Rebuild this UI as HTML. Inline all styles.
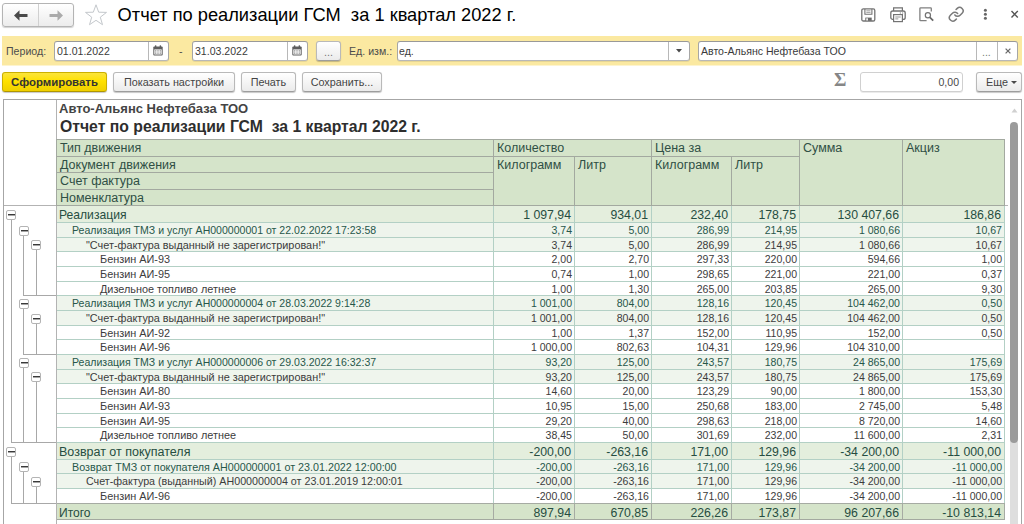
<!DOCTYPE html>
<html><head><meta charset="utf-8"><title>Отчет по реализации ГСМ</title>
<style>
html,body{margin:0;padding:0}
body{width:1024px;height:524px;overflow:hidden;background:#fff;position:relative;font-family:"Liberation Sans",sans-serif;color:#333;font-size:11px}
div,span,i{box-sizing:border-box}
.a{position:absolute}
/* top nav */
.nav{position:absolute;left:2px;top:3px;width:72px;height:24px;border:1px solid #b4b4b4;border-radius:3px;background:linear-gradient(#fff,#ececec);box-shadow:0 1px 1px rgba(0,0,0,.18)}
.nav .d{position:absolute;left:35px;top:0;width:1px;height:22px;background:#d0d0d0}
.title{position:absolute;left:117.6px;top:4px;font-size:18.25px;line-height:22px;color:#000;white-space:pre}
/* yellow bar */
.ybar{position:absolute;left:2px;top:36px;width:1020px;height:29px;border-bottom:1px solid #fdf4cf;box-sizing:content-box;background:#fbe9a1}
.lbl{position:absolute;font-size:10.6px;color:#4c4c4c;line-height:14px;white-space:pre}
.inp{position:absolute;height:20px;background:#fff;border:1px solid #a6a6a6;border-top-color:#999;border-bottom-color:#b8b8b8;border-radius:3px;font-size:10.55px;line-height:19px;color:#3a3a3a;white-space:pre;box-shadow:0 1px 0 rgba(0,0,0,.08)}
.inp .t{position:absolute;left:2px;top:0}
.inp .sep{position:absolute;top:0;width:1px;height:18px;background:#b8b8b8}
.btn{position:absolute;height:20px;border:1px solid #b9b9b9;border-bottom-color:#9d9d9d;border-radius:3px;background:linear-gradient(#ffffff,#ebebeb);box-shadow:0 1px 1px rgba(0,0,0,.22);font-size:10.8px;line-height:18px;text-align:center;color:#444;white-space:pre}
.btn.y{background:linear-gradient(#fbe43c,#ffe100 45%,#f0d000);border-color:#cbb000;border-bottom-color:#b09600;color:#333;font-weight:bold;font-size:11.4px}
/* sheet */
.frame{position:absolute;left:3px;top:99px;width:1019px;height:430px;border:1px solid #a6a6a6;border-right-color:#a6a6a6;background:#fff}
.vsep{position:absolute;left:56px;top:100px;width:1px;height:425px;background:#b3b3b3}
.hsep{position:absolute;left:4px;top:205px;width:52px;height:1px;background:#b3b3b3}
.org{position:absolute;left:59px;top:101px;font-size:13px;font-weight:bold;line-height:16px;color:#444;white-space:pre}
.rt{position:absolute;left:60px;top:117px;font-size:15.75px;font-weight:bold;line-height:19px;color:#2e2e2e;white-space:pre}
.hd{position:absolute;background:#d5e4ca;border:1px solid #a3a9a0;font-size:12.5px;line-height:17px;color:#2f4f45;white-space:pre;padding:0 0 0 3px}
.r{position:absolute;left:0;width:1024px}
.r .n{position:absolute;top:0;white-space:pre}
.r .v{position:absolute;top:0;text-align:right;padding-right:2px;white-space:pre}
.l0 .n,.l0 .v,.l4 .n,.l4 .v{top:1px}
.l0 .v,.l4 .v{padding-right:3px}
.r::before{content:"";box-sizing:border-box;position:absolute;left:57px;top:0;height:100%;background-color:#fff;border-bottom:1px solid #b3d0c5;background-size:1px 100%;background-repeat:no-repeat}
.r::before{width:948px;background-image:linear-gradient(#b3d0c5,#b3d0c5),linear-gradient(#b3d0c5,#b3d0c5),linear-gradient(#b3d0c5,#b3d0c5),linear-gradient(#b3d0c5,#b3d0c5),linear-gradient(#b3d0c5,#b3d0c5),linear-gradient(#b3d0c5,#b3d0c5),linear-gradient(#b3d0c5,#b3d0c5);background-position:436px 0,517px 0,594px 0,674px 0,742px 0,845px 0,947px 0}
.l4::before{background-image:linear-gradient(#a6aba3,#a6aba3),linear-gradient(#a6aba3,#a6aba3),linear-gradient(#a6aba3,#a6aba3),linear-gradient(#a6aba3,#a6aba3),linear-gradient(#a6aba3,#a6aba3),linear-gradient(#a6aba3,#a6aba3),linear-gradient(#a6aba3,#a6aba3);border-top:1px solid #a6aba3;top:-1px;height:calc(100% + 1px)}
.l1,.l2,.l3{font-size:10.55px;line-height:14px;color:#3c3c3c}
.l0{font-size:12.3px;line-height:17px;color:#2f3d33}
.l4{font-size:12.3px;line-height:17px;color:#2f3d33}
.l0::before{background-color:#e4eedd}
.l1::before{background-color:#eef4ec}
.l2::before{background-color:#eff5ed}
.l4::before{background-color:#d5e4ca;border-bottom-color:#a3a9a0}
.l1 .n,.l1 .v{color:#27574a}
.l0 .n,.l0 .v,.l4 .n,.l4 .v{color:#264d41}
/* tree */
.bx{position:absolute;width:10px;height:10px;border:1px solid #b4b4b4;border-radius:2px;background:#fff}
.bx i{position:absolute;left:0.5px;top:3px;width:7px;height:2px;background:linear-gradient(#3a3a3a 50%,#a5a5a5 50%)}
.tl{position:absolute;background:#a8a8a8}
/* scrollbar */
.thumb{position:absolute;left:1010px;top:122px;width:8px;height:321px;border-radius:4px;background:#9b9b9b}
</style></head>
<body>
<!-- nav buttons -->
<div class="nav"><div class="d"></div>
<svg class="a" style="left:11px;top:6px" width="14" height="11" viewBox="0 0 14 10" preserveAspectRatio="none"><path d="M0 5 L5.5 0.3 V3.6 H13.5 V6.4 H5.5 V9.7 Z" fill="#4a4a4a"/></svg>
<svg class="a" style="left:46px;top:6px" width="14" height="11" viewBox="0 0 14 10" preserveAspectRatio="none"><path d="M14 5 L8.5 0.3 V3.6 H0.5 V6.4 H8.5 V9.7 Z" fill="#ababab"/></svg>
</div>
<svg class="a" style="left:84px;top:3px" width="24" height="23" viewBox="0 0 24 23"><path d="M12 1.8 L14.7 9.2 L22.5 9.4 L16.3 14.2 L18.5 21.7 L12 17.3 L5.5 21.7 L7.7 14.2 L1.5 9.4 L9.3 9.2 Z" fill="#fff" stroke="#c4c8cc" stroke-width="1"/></svg>
<div class="title">Отчет по реализации ГСМ  за 1 квартал 2022 г.</div>

<!-- right icons -->
<svg class="a" style="left:860px;top:7px" width="17" height="16" viewBox="0 0 17 16"><rect x="1.8" y="1.8" width="13" height="12.2" rx="1.6" fill="none" stroke="#737373" stroke-width="1.3"/><path d="M4.9 2 V7.2 H11.9 V2" fill="none" stroke="#737373" stroke-width="1.1"/><path d="M6.3 3.8 H10.5 M6.3 5.4 H10.5" stroke="#8a8a8a" stroke-width="0.8"/><rect x="5.3" y="10.6" width="6.4" height="3.2" fill="#6a6a6a"/><rect x="6.2" y="11.3" width="1.8" height="2.2" fill="#f0f0f0"/></svg>
<svg class="a" style="left:889px;top:6px" width="18" height="17" viewBox="0 0 18 17"><path d="M4.6 5 V1.8 H13.4 V5" fill="none" stroke="#737373" stroke-width="1.2"/><rect x="1.8" y="5" width="14.4" height="8.4" rx="2" fill="#fff" stroke="#737373" stroke-width="1.3"/><rect x="4.6" y="8.6" width="8.8" height="7" fill="#fff" stroke="#737373" stroke-width="1.2"/><path d="M6.3 11 H11.7 M6.3 12.9 H9.3" stroke="#8a8a8a" stroke-width="0.9"/><path d="M10.8 7 H12 M13 7 H14.2" stroke="#777" stroke-width="0.9"/></svg>
<svg class="a" style="left:918px;top:6px" width="18" height="17" viewBox="0 0 18 17"><path d="M13.3 5.5 V2.6 Q13.3 1.9 12.6 1.9 H2.6 Q1.9 1.9 1.9 2.6 V14 Q1.9 14.7 2.6 14.7 H8.6" fill="none" stroke="#808080" stroke-width="1.3"/><circle cx="9.9" cy="9.3" r="2.6" fill="#fff" stroke="#737373" stroke-width="1.2"/><path d="M11.9 11.4 L15.2 14.6" stroke="#666" stroke-width="1.7"/></svg>
<svg class="a" style="left:948px;top:6px" width="16.5" height="16.5" viewBox="0 0 24 24" fill="none" stroke="#7a7a7a" stroke-width="2.2" stroke-linecap="round"><path d="M10 13a5 5 0 0 0 7.54.54l3-3a5 5 0 0 0-7.07-7.07l-1.72 1.71"/><path d="M14 11a5 5 0 0 0-7.54-.54l-3 3a5 5 0 0 0 7.07 7.07l1.71-1.71"/></svg>
<svg class="a" style="left:983px;top:8px" width="5" height="13" viewBox="0 0 5 13"><circle cx="2.4" cy="2.3" r="1.5" fill="#666"/><circle cx="2.4" cy="6.3" r="1.5" fill="#666"/><circle cx="2.4" cy="10.3" r="1.5" fill="#666"/></svg>
<svg class="a" style="left:1010px;top:10px" width="9" height="9" viewBox="0 0 9 9"><path d="M1.5 1 L7.8 7.5 M7.8 1 L1.5 7.5" stroke="#555" stroke-width="1.4"/></svg>

<!-- yellow bar -->
<div class="ybar"></div>
<div class="lbl" style="left:6px;top:44px">Период:</div>
<div class="inp" style="left:54px;top:41px;width:115px"><span class="t">01.01.2022</span><div class="sep" style="left:93px"></div><svg class="a" style="left:98px;top:3px" width="10" height="10.5" viewBox="0 0 10 10.5"><rect x="0.3" y="1.5" width="9.4" height="9" rx="1" fill="#5e5e5e"/><rect x="1.9" y="0.2" width="1.5" height="2" rx="0.6" fill="#5e5e5e"/><rect x="6.6" y="0.2" width="1.5" height="2" rx="0.6" fill="#5e5e5e"/><rect x="1.3" y="4.4" width="7.4" height="5.1" fill="#fff"/><g fill="#8a8a8a"><rect x="2" y="5.3" width="1.4" height="1.2"/><rect x="4.3" y="5.3" width="1.4" height="1.2"/><rect x="6.6" y="5.3" width="1.4" height="1.2"/><rect x="2" y="7.5" width="1.4" height="1.2"/><rect x="4.3" y="7.5" width="1.4" height="1.2"/><rect x="6.6" y="7.5" width="1.4" height="1.2"/></g></svg></div>
<div class="lbl" style="left:179px;top:44px">-</div>
<div class="inp" style="left:192px;top:41px;width:116px"><span class="t">31.03.2022</span><div class="sep" style="left:94px"></div><svg class="a" style="left:99px;top:3px" width="10" height="10.5" viewBox="0 0 10 10.5"><rect x="0.3" y="1.5" width="9.4" height="9" rx="1" fill="#5e5e5e"/><rect x="1.9" y="0.2" width="1.5" height="2" rx="0.6" fill="#5e5e5e"/><rect x="6.6" y="0.2" width="1.5" height="2" rx="0.6" fill="#5e5e5e"/><rect x="1.3" y="4.4" width="7.4" height="5.1" fill="#fff"/><g fill="#8a8a8a"><rect x="2" y="5.3" width="1.4" height="1.2"/><rect x="4.3" y="5.3" width="1.4" height="1.2"/><rect x="6.6" y="5.3" width="1.4" height="1.2"/><rect x="2" y="7.5" width="1.4" height="1.2"/><rect x="4.3" y="7.5" width="1.4" height="1.2"/><rect x="6.6" y="7.5" width="1.4" height="1.2"/></g></svg></div>
<div class="btn" style="left:316px;top:41px;width:25px;height:20px;line-height:20px;color:#777">...</div>
<div class="lbl" style="left:349px;top:44px">Ед. изм.:</div>
<div class="inp" style="left:397px;top:41px;width:293px"><span class="t" style="left:1px">ед.</span><div class="sep" style="left:270px"></div><svg class="a" style="left:277.5px;top:7px" width="6" height="3.6" viewBox="0 0 7 4"><path d="M0 0 H7 L3.5 4 Z" fill="#4a4a4a"/></svg></div>
<div class="inp" style="left:698px;top:41px;width:320px"><span class="t">Авто-Альянс Нефтебаза ТОО</span><div class="sep" style="left:277px"></div><div class="sep" style="left:298px"></div><span class="a" style="left:283px;top:1px;color:#777">...</span><svg class="a" style="left:305.5px;top:6px" width="6" height="6" viewBox="0 0 7 7"><path d="M0.7 0.7 L6.3 6.3 M6.3 0.7 L0.7 6.3" stroke="#6a6a6a" stroke-width="1.5"/></svg></div>

<!-- command bar -->
<div class="btn y" style="left:2px;top:72px;width:105px">Сформировать</div>
<div class="btn" style="left:113px;top:72px;width:122px">Показать настройки</div>
<div class="btn" style="left:241px;top:72px;width:55px">Печать</div>
<div class="btn" style="left:302px;top:72px;width:80px">Сохранить...</div>
<div class="a" style="left:834px;top:69px;font-family:'Liberation Serif',serif;font-size:19px;line-height:22px;color:#868686;font-weight:bold">Σ</div>
<div class="inp" style="left:860px;top:72px;width:103px;height:20px;border-color:#d0d0d0;text-align:right"><span class="a" style="right:3px;top:0px;color:#4a4a4a">0,00</span></div>
<div class="btn" style="left:976px;top:72px;width:46px;text-align:left;padding-left:9px">Еще<svg class="a" style="left:34px;top:8px" width="6" height="3" viewBox="0 0 6 3"><path d="M0 0 H6 L3 3 Z" fill="#4a4a4a"/></svg></div>

<!-- sheet -->
<div class="frame"></div>
<div class="vsep"></div>
<div class="hsep"></div>
<div class="org">Авто-Альянс Нефтебаза ТОО</div>
<div class="rt">Отчет по реализации ГСМ  за 1 квартал 2022 г.</div>


<div class="hd" style="left:56px;top:139px;width:438px;height:18px">Тип движения</div>
<div class="hd" style="left:56px;top:156px;width:438px;height:17px">Документ движения</div>
<div class="hd" style="left:56px;top:172px;width:438px;height:18px">Счет фактура</div>
<div class="hd" style="left:56px;top:189px;width:438px;height:17px">Номенклатура</div>
<div class="hd" style="left:493px;top:139px;width:159px;height:18px">Количество</div>
<div class="hd" style="left:493px;top:156px;width:82px;height:50px">Килограмм</div>
<div class="hd" style="left:574px;top:156px;width:78px;height:50px">Литр</div>
<div class="hd" style="left:651px;top:139px;width:149px;height:18px">Цена за</div>
<div class="hd" style="left:651px;top:156px;width:81px;height:50px">Килограмм</div>
<div class="hd" style="left:731px;top:156px;width:69px;height:50px">Литр</div>
<div class="hd" style="left:799px;top:139px;width:104px;height:67px">Сумма</div>
<div class="hd" style="left:902px;top:139px;width:103px;height:67px">Акциз</div>
<div class="r l0" style="top:206px;height:17px">
<span class="n" style="left:59px;font-size:12.13px">Реализация</span>
<span class="v" style="left:494px;width:80px">1 097,94</span>
<span class="v" style="left:575px;width:76px">934,01</span>
<span class="v" style="left:652px;width:79px">232,40</span>
<span class="v" style="left:732px;width:67px">178,75</span>
<span class="v" style="left:800px;width:102px">130 407,66</span>
<span class="v" style="left:903px;width:101px">186,86</span>
</div>
<div class="r l1" style="top:223px;height:15px">
<span class="n" style="left:72px;font-size:10.55px">Реализация ТМЗ и услуг АН000000001 от 22.02.2022 17:23:58</span>
<span class="v" style="left:494px;width:80px">3,74</span>
<span class="v" style="left:575px;width:76px">5,00</span>
<span class="v" style="left:652px;width:79px">286,99</span>
<span class="v" style="left:732px;width:67px">214,95</span>
<span class="v" style="left:800px;width:102px">1 080,66</span>
<span class="v" style="left:903px;width:101px">10,67</span>
</div>
<div class="r l2" style="top:238px;height:14px">
<span class="n" style="left:86px;font-size:10.86px">&quot;Счет-фактура выданный не зарегистрирован!&quot;</span>
<span class="v" style="left:494px;width:80px">3,74</span>
<span class="v" style="left:575px;width:76px">5,00</span>
<span class="v" style="left:652px;width:79px">286,99</span>
<span class="v" style="left:732px;width:67px">214,95</span>
<span class="v" style="left:800px;width:102px">1 080,66</span>
<span class="v" style="left:903px;width:101px">10,67</span>
</div>
<div class="r l3" style="top:252px;height:15px">
<span class="n" style="left:100px;font-size:10.86px">Бензин АИ-93</span>
<span class="v" style="left:494px;width:80px">2,00</span>
<span class="v" style="left:575px;width:76px">2,70</span>
<span class="v" style="left:652px;width:79px">297,33</span>
<span class="v" style="left:732px;width:67px">220,00</span>
<span class="v" style="left:800px;width:102px">594,66</span>
<span class="v" style="left:903px;width:101px">1,00</span>
</div>
<div class="r l3" style="top:267px;height:15px">
<span class="n" style="left:100px;font-size:10.86px">Бензин АИ-95</span>
<span class="v" style="left:494px;width:80px">0,74</span>
<span class="v" style="left:575px;width:76px">1,00</span>
<span class="v" style="left:652px;width:79px">298,65</span>
<span class="v" style="left:732px;width:67px">221,00</span>
<span class="v" style="left:800px;width:102px">221,00</span>
<span class="v" style="left:903px;width:101px">0,37</span>
</div>
<div class="r l3" style="top:282px;height:14px">
<span class="n" style="left:100px;font-size:10.86px">Дизельное топливо летнее</span>
<span class="v" style="left:494px;width:80px">1,00</span>
<span class="v" style="left:575px;width:76px">1,30</span>
<span class="v" style="left:652px;width:79px">265,00</span>
<span class="v" style="left:732px;width:67px">203,85</span>
<span class="v" style="left:800px;width:102px">265,00</span>
<span class="v" style="left:903px;width:101px">9,30</span>
</div>
<div class="r l1" style="top:296px;height:15px">
<span class="n" style="left:72px;font-size:10.55px">Реализация ТМЗ и услуг АН000000004 от 28.03.2022 9:14:28</span>
<span class="v" style="left:494px;width:80px">1 001,00</span>
<span class="v" style="left:575px;width:76px">804,00</span>
<span class="v" style="left:652px;width:79px">128,16</span>
<span class="v" style="left:732px;width:67px">120,45</span>
<span class="v" style="left:800px;width:102px">104 462,00</span>
<span class="v" style="left:903px;width:101px">0,50</span>
</div>
<div class="r l2" style="top:311px;height:15px">
<span class="n" style="left:86px;font-size:10.86px">&quot;Счет-фактура выданный не зарегистрирован!&quot;</span>
<span class="v" style="left:494px;width:80px">1 001,00</span>
<span class="v" style="left:575px;width:76px">804,00</span>
<span class="v" style="left:652px;width:79px">128,16</span>
<span class="v" style="left:732px;width:67px">120,45</span>
<span class="v" style="left:800px;width:102px">104 462,00</span>
<span class="v" style="left:903px;width:101px">0,50</span>
</div>
<div class="r l3" style="top:326px;height:14px">
<span class="n" style="left:100px;font-size:10.86px">Бензин АИ-92</span>
<span class="v" style="left:494px;width:80px">1,00</span>
<span class="v" style="left:575px;width:76px">1,37</span>
<span class="v" style="left:652px;width:79px">152,00</span>
<span class="v" style="left:732px;width:67px">110,95</span>
<span class="v" style="left:800px;width:102px">152,00</span>
<span class="v" style="left:903px;width:101px">0,50</span>
</div>
<div class="r l3" style="top:340px;height:15px">
<span class="n" style="left:100px;font-size:10.86px">Бензин АИ-96</span>
<span class="v" style="left:494px;width:80px">1 000,00</span>
<span class="v" style="left:575px;width:76px">802,63</span>
<span class="v" style="left:652px;width:79px">104,31</span>
<span class="v" style="left:732px;width:67px">129,96</span>
<span class="v" style="left:800px;width:102px">104 310,00</span>
<span class="v" style="left:903px;width:101px"></span>
</div>
<div class="r l1" style="top:355px;height:15px">
<span class="n" style="left:72px;font-size:10.55px">Реализация ТМЗ и услуг АН000000006 от 29.03.2022 16:32:37</span>
<span class="v" style="left:494px;width:80px">93,20</span>
<span class="v" style="left:575px;width:76px">125,00</span>
<span class="v" style="left:652px;width:79px">243,57</span>
<span class="v" style="left:732px;width:67px">180,75</span>
<span class="v" style="left:800px;width:102px">24 865,00</span>
<span class="v" style="left:903px;width:101px">175,69</span>
</div>
<div class="r l2" style="top:370px;height:14px">
<span class="n" style="left:86px;font-size:10.86px">&quot;Счет-фактура выданный не зарегистрирован!&quot;</span>
<span class="v" style="left:494px;width:80px">93,20</span>
<span class="v" style="left:575px;width:76px">125,00</span>
<span class="v" style="left:652px;width:79px">243,57</span>
<span class="v" style="left:732px;width:67px">180,75</span>
<span class="v" style="left:800px;width:102px">24 865,00</span>
<span class="v" style="left:903px;width:101px">175,69</span>
</div>
<div class="r l3" style="top:384px;height:15px">
<span class="n" style="left:100px;font-size:10.86px">Бензин АИ-80</span>
<span class="v" style="left:494px;width:80px">14,60</span>
<span class="v" style="left:575px;width:76px">20,00</span>
<span class="v" style="left:652px;width:79px">123,29</span>
<span class="v" style="left:732px;width:67px">90,00</span>
<span class="v" style="left:800px;width:102px">1 800,00</span>
<span class="v" style="left:903px;width:101px">153,30</span>
</div>
<div class="r l3" style="top:399px;height:15px">
<span class="n" style="left:100px;font-size:10.86px">Бензин АИ-93</span>
<span class="v" style="left:494px;width:80px">10,95</span>
<span class="v" style="left:575px;width:76px">15,00</span>
<span class="v" style="left:652px;width:79px">250,68</span>
<span class="v" style="left:732px;width:67px">183,00</span>
<span class="v" style="left:800px;width:102px">2 745,00</span>
<span class="v" style="left:903px;width:101px">5,48</span>
</div>
<div class="r l3" style="top:414px;height:14px">
<span class="n" style="left:100px;font-size:10.86px">Бензин АИ-95</span>
<span class="v" style="left:494px;width:80px">29,20</span>
<span class="v" style="left:575px;width:76px">40,00</span>
<span class="v" style="left:652px;width:79px">298,63</span>
<span class="v" style="left:732px;width:67px">218,00</span>
<span class="v" style="left:800px;width:102px">8 720,00</span>
<span class="v" style="left:903px;width:101px">14,60</span>
</div>
<div class="r l3" style="top:428px;height:15px">
<span class="n" style="left:100px;font-size:10.86px">Дизельное топливо летнее</span>
<span class="v" style="left:494px;width:80px">38,45</span>
<span class="v" style="left:575px;width:76px">50,00</span>
<span class="v" style="left:652px;width:79px">301,69</span>
<span class="v" style="left:732px;width:67px">232,00</span>
<span class="v" style="left:800px;width:102px">11 600,00</span>
<span class="v" style="left:903px;width:101px">2,31</span>
</div>
<div class="r l0" style="top:443px;height:17px">
<span class="n" style="left:59px;font-size:12.5px">Возврат от покупателя</span>
<span class="v" style="left:494px;width:80px">-200,00</span>
<span class="v" style="left:575px;width:76px">-263,16</span>
<span class="v" style="left:652px;width:79px">171,00</span>
<span class="v" style="left:732px;width:67px">129,96</span>
<span class="v" style="left:800px;width:102px">-34 200,00</span>
<span class="v" style="left:903px;width:101px">-11 000,00</span>
</div>
<div class="r l1" style="top:460px;height:14px">
<span class="n" style="left:72px;font-size:10.74px">Возврат ТМЗ от покупателя АН000000001 от 23.01.2022 12:00:00</span>
<span class="v" style="left:494px;width:80px">-200,00</span>
<span class="v" style="left:575px;width:76px">-263,16</span>
<span class="v" style="left:652px;width:79px">171,00</span>
<span class="v" style="left:732px;width:67px">129,96</span>
<span class="v" style="left:800px;width:102px">-34 200,00</span>
<span class="v" style="left:903px;width:101px">-11 000,00</span>
</div>
<div class="r l2" style="top:474px;height:15px">
<span class="n" style="left:86px;font-size:10.73px">Счет-фактура (выданный) АН000000004 от 23.01.2019 12:00:01</span>
<span class="v" style="left:494px;width:80px">-200,00</span>
<span class="v" style="left:575px;width:76px">-263,16</span>
<span class="v" style="left:652px;width:79px">171,00</span>
<span class="v" style="left:732px;width:67px">129,96</span>
<span class="v" style="left:800px;width:102px">-34 200,00</span>
<span class="v" style="left:903px;width:101px">-11 000,00</span>
</div>
<div class="r l3" style="top:489px;height:15px">
<span class="n" style="left:100px;font-size:10.86px">Бензин АИ-96</span>
<span class="v" style="left:494px;width:80px">-200,00</span>
<span class="v" style="left:575px;width:76px">-263,16</span>
<span class="v" style="left:652px;width:79px">171,00</span>
<span class="v" style="left:732px;width:67px">129,96</span>
<span class="v" style="left:800px;width:102px">-34 200,00</span>
<span class="v" style="left:903px;width:101px">-11 000,00</span>
</div>
<div class="r l4" style="top:504px;height:16px">
<span class="n" style="left:59px;font-size:12.05px">Итого</span>
<span class="v" style="left:494px;width:80px">897,94</span>
<span class="v" style="left:575px;width:76px">670,85</span>
<span class="v" style="left:652px;width:79px">226,26</span>
<span class="v" style="left:732px;width:67px">173,87</span>
<span class="v" style="left:800px;width:102px">96 207,66</span>
<span class="v" style="left:903px;width:101px">-10 813,14</span>
</div>
<div class="bx" style="left:6px;top:210px"><i></i></div>
<div class="tl" style="left:11px;top:220px;width:1px;height:223px"></div>
<div class="bx" style="left:19px;top:226px"><i></i></div>
<div class="tl" style="left:23px;top:236px;width:1px;height:60px"></div>
<div class="bx" style="left:31px;top:240px"><i></i></div>
<div class="tl" style="left:36px;top:250px;width:1px;height:46px"></div>
<div class="bx" style="left:19px;top:299px"><i></i></div>
<div class="tl" style="left:23px;top:309px;width:1px;height:46px"></div>
<div class="bx" style="left:31px;top:314px"><i></i></div>
<div class="tl" style="left:36px;top:324px;width:1px;height:31px"></div>
<div class="bx" style="left:19px;top:358px"><i></i></div>
<div class="tl" style="left:23px;top:368px;width:1px;height:75px"></div>
<div class="bx" style="left:31px;top:372px"><i></i></div>
<div class="tl" style="left:36px;top:382px;width:1px;height:61px"></div>
<div class="bx" style="left:6px;top:447px"><i></i></div>
<div class="tl" style="left:11px;top:457px;width:1px;height:47px"></div>
<div class="bx" style="left:19px;top:462px"><i></i></div>
<div class="tl" style="left:23px;top:472px;width:1px;height:32px"></div>
<div class="bx" style="left:31px;top:477px"><i></i></div>
<div class="tl" style="left:36px;top:487px;width:1px;height:17px"></div>
<div class="tl" style="left:23px;top:295px;width:33px;height:1px"></div>
<div class="tl" style="left:23px;top:354px;width:33px;height:1px"></div>
<div class="tl" style="left:11px;top:442px;width:45px;height:1px"></div>
<div class="tl" style="left:11px;top:503px;width:45px;height:1px"></div>
<div class="a" style="left:1005px;top:205px;width:3px;height:1px;background:#b5b5b5"></div>
<div class="a" style="left:1010px;top:436px;width:8px;height:90px;background:#dedede"></div>
<div class="thumb"></div>
<svg class="a" style="left:1011px;top:108px" width="7" height="5" viewBox="0 0 7 5"><path d="M3.5 0.5 L6.5 4.5 H0.5 Z" fill="#d0d0d0"/></svg>
</body></html>
